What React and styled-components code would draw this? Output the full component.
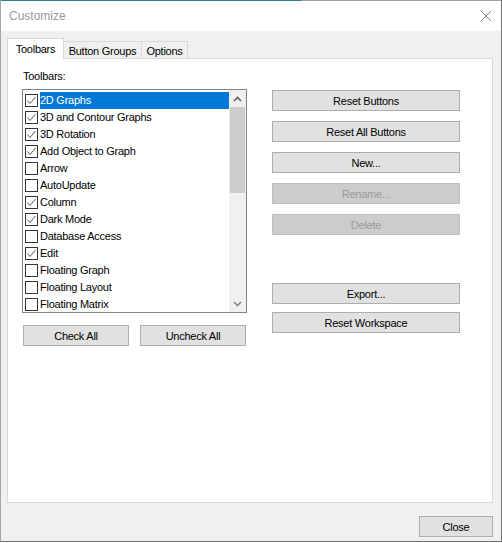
import React from "react";
import styled, { createGlobalStyle } from "styled-components";

const GlobalStyle = createGlobalStyle`
  html, body {
    margin: 0;
    padding: 0;
    background: #ffffff;
  }
  body {
    font-family: "Liberation Sans", Arial, sans-serif;
  }
  * { box-sizing: border-box; }
`;

const toolbars = [
  { name: "2D Graphs", on: true },
  { name: "3D and Contour Graphs", on: true },
  { name: "3D Rotation", on: true },
  { name: "Add Object to Graph", on: true },
  { name: "Arrow", on: false },
  { name: "AutoUpdate", on: false },
  { name: "Column", on: true },
  { name: "Dark Mode", on: true },
  { name: "Database Access", on: false },
  { name: "Edit", on: true },
  { name: "Floating Graph", on: false },
  { name: "Floating Layout", on: false },
  { name: "Floating Matrix", on: false },
];

export default function App() {
  return (
    <>
      <GlobalStyle />
      <Window>
        <TopEdge />
        <TitleBar>
          <Title>Customize</Title>
          <CloseX width="12" height="12" viewBox="0 0 12 12">
            <path d="M1 1 L11 11 M11 1 L1 11" stroke="#8a8a8a" strokeWidth="1" fill="none" />
          </CloseX>
        </TitleBar>
        <Body>
          <TabStrip>
            <Tab $active $w={57}>Toolbars</Tab>
            <Tab $w={78}>Button Groups</Tab>
            <Tab $w={46}>Options</Tab>
          </TabStrip>
          <Panel>
            <LeftCol>
              <Label>Toolbars:</Label>
              <ListBox>
                <Items>
                  {toolbars.map((t, i) => (
                    <Item key={t.name}>
                      <Check>
                        {t.on && (
                          <svg width="11" height="11" viewBox="0 0 11 11">
                            <path d="M1.5 5.5 L4 8.5 L9.5 2" stroke="#5a5a5a" strokeWidth="1" fill="none" />
                          </svg>
                        )}
                      </Check>
                      <ItemText $selected={i === 0}>{t.name}</ItemText>
                    </Item>
                  ))}
                </Items>
                <ScrollBar>
                  <Arrow>
                    <svg width="9" height="6" viewBox="0 0 9 6">
                      <path d="M1 5 L4.5 1.5 L8 5" stroke="#606060" strokeWidth="1.6" fill="none" />
                    </svg>
                  </Arrow>
                  <Thumb />
                  <Track />
                  <Arrow>
                    <svg width="9" height="6" viewBox="0 0 9 6">
                      <path d="M1 1 L4.5 4.5 L8 1" stroke="#8a8a8a" strokeWidth="1.6" fill="none" />
                    </svg>
                  </Arrow>
                </ScrollBar>
              </ListBox>
              <ButtonRow>
                <Button $w={106}>Check All</Button>
                <Button $w={106}>Uncheck All</Button>
              </ButtonRow>
            </LeftCol>
            <RightCol>
              <ButtonGroup>
                <Button>Reset Buttons</Button>
                <Button>Reset All Buttons</Button>
                <Button>New...</Button>
                <Button disabled>Rename...</Button>
                <Button disabled>Delete</Button>
              </ButtonGroup>
              <ButtonGroup $gap={8} $top={48}>
                <Button>Export...</Button>
                <Button>Reset Workspace</Button>
              </ButtonGroup>
            </RightCol>
          </Panel>
          <Footer>
            <Button $w={74}>Close</Button>
          </Footer>
        </Body>
      </Window>
    </>
  );
}

const Window = styled.div`
  width: 502px;
  height: 542px;
  display: flex;
  flex-direction: column;
  border-left: 1px solid #a6a6a6;
  border-right: 1px solid #707070;
  border-bottom: 1px solid #707070;
  background: #f0f0f0;
`;

const TopEdge = styled.div`
  height: 1px;
  background: linear-gradient(to right, #2f7d8f 0, #2f7d8f 300px, #a0a0a0 300px);
`;

const TitleBar = styled.div`
  height: 30px;
  background: #ffffff;
  display: flex;
  align-items: center;
  justify-content: space-between;
  padding: 0 9px 0 8px;
`;

const Title = styled.span`
  font-size: 12px;
  color: #9a9a9a;
`;

const CloseX = styled.svg`
  display: block;
`;

const Body = styled.div`
  flex: 1;
  display: flex;
  flex-direction: column;
  padding: 7px 8px 0 6px;
`;

const TabStrip = styled.div`
  display: flex;
  align-items: flex-end;
  height: 20px;
`;

const Tab = styled.div`
  width: ${(p) => p.$w}px;
  height: ${(p) => (p.$active ? 21 : 17)}px;
  margin-bottom: ${(p) => (p.$active ? -1 : 0)}px;
  position: relative;
  z-index: ${(p) => (p.$active ? 1 : 0)};
  background: ${(p) => (p.$active ? "#ffffff" : "#f0f0f0")};
  border: 1px solid #d9d9d9;
  border-bottom: none;
  border-left: ${(p) => (p.$active ? "1px solid #d9d9d9" : "none")};
  font-size: 11px;
  letter-spacing: -0.25px;
  color: #000;
  display: flex;
  align-items: center;
  justify-content: center;
  padding-top: ${(p) => (p.$active ? 0 : 1)}px;
`;

const Panel = styled.div`
  width: 486px;
  height: 445px;
  background: #ffffff;
  border: 1px solid #d9d9d9;
  display: flex;
  padding: 11px 0 0 14px;
`;

const LeftCol = styled.div`
  width: 225px;
  display: flex;
  flex-direction: column;
`;

const Label = styled.div`
  font-size: 11px;
  letter-spacing: -0.25px;
  line-height: 13px;
  height: 13px;
  padding-left: 1px;
  color: #000;
`;

const ListBox = styled.div`
  margin-top: 6px;
  height: 224px;
  border: 1px solid #828282;
  display: flex;
  background: #fff;
`;

const Items = styled.div`
  flex: 1;
  padding-top: 2px;
  overflow: hidden;
`;

const Item = styled.div`
  height: 17px;
  display: flex;
  align-items: center;
`;

const Check = styled.div`
  width: 13px;
  height: 13px;
  margin: 0 2px 0 2px;
  border: 1px solid #333333;
  background: #fff;
  display: flex;
  align-items: center;
  justify-content: center;
  flex-shrink: 0;
`;

const ItemText = styled.div`
  flex: 1;
  height: 17px;
  line-height: 17px;
  font-size: 11px;
  letter-spacing: -0.25px;
  white-space: nowrap;
  color: ${(p) => (p.$selected ? "#ffffff" : "#000000")};
  background: ${(p) => (p.$selected ? "#0078d7" : "transparent")};
`;

const ScrollBar = styled.div`
  width: 17px;
  display: flex;
  flex-direction: column;
  background: #f0f0f0;
`;

const Arrow = styled.div`
  height: 17px;
  display: flex;
  align-items: center;
  justify-content: center;
`;

const Thumb = styled.div`
  height: 86px;
  margin: 0 1px;
  background: #cdcdcd;
`;

const Track = styled.div`
  flex: 1;
`;

const ButtonRow = styled.div`
  display: flex;
  justify-content: space-between;
  margin-top: 12px;
  padding: 0 1px;
`;

const Button = styled.button`
  width: ${(p) => (p.$w ? `${p.$w}px` : "100%")};
  height: 21px;
  padding: 0;
  background: ${(p) => (p.disabled ? "#cccccc" : "#e1e1e1")};
  border: 1px solid ${(p) => (p.disabled ? "#bfbfbf" : "#adadad")};
  color: ${(p) => (p.disabled ? "#9b9b9b" : "#000000")};
  font-family: "Liberation Sans", Arial, sans-serif;
  font-weight: 400;
  font-size: 11px;
  letter-spacing: -0.25px;
  text-align: center;
`;

const RightCol = styled.div`
  width: 188px;
  margin-left: 25px;
  padding-top: 20px;
  display: flex;
  flex-direction: column;
`;

const ButtonGroup = styled.div`
  display: flex;
  flex-direction: column;
  gap: ${(p) => p.$gap || 10}px;
  margin-top: ${(p) => p.$top || 0}px;
`;

const Footer = styled.div`
  display: flex;
  justify-content: flex-end;
  margin-top: 13px;
`;
